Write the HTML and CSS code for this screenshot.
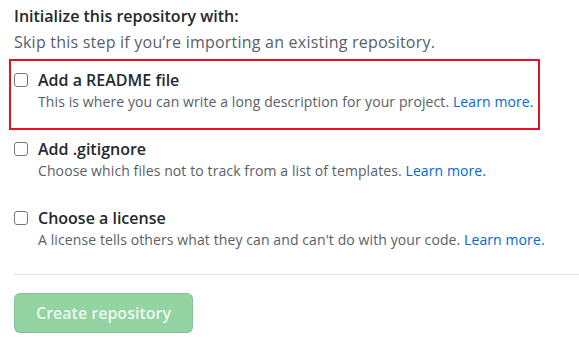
FILE: index.html
```html
<!DOCTYPE html>
<html>
<head>
    <link rel="stylesheet" href="styles.css">
</head>
<body>
    <div class="init-section">
        <h3 class="init-title">Initialize this repository with:</h3>
        <p class="init-note">Skip this step if you’re importing an existing repository.</p>

        <div class="option marked">
            <input type="checkbox" class="option-check">
            <div class="option-body">
                <div class="option-title">Add a README file</div>
                <div class="option-desc">This is where you can write a long description for your project. <a href="#">Learn more.</a></div>
            </div>
        </div>

        <div class="option">
            <input type="checkbox" class="option-check">
            <div class="option-body">
                <div class="option-title">Add .gitignore</div>
                <div class="option-desc">Choose which files not to track from a list of templates. <a href="#">Learn more.</a></div>
            </div>
        </div>

        <div class="option">
            <input type="checkbox" class="option-check">
            <div class="option-body">
                <div class="option-title">Choose a license</div>
                <div class="option-desc">A license tells others what they can and can't do with your code. <a href="#">Learn more.</a></div>
            </div>
        </div>
    </div>

    <hr class="divider">

    <button class="btn-create" disabled>Create repository</button>
</body>
</html>
```

FILE: styles.css
```css
body {
    margin: 0;
    padding: 4px 0 0 14px;
    font-family: 'Open Sans', 'Noto Sans', sans-serif;
    color: #24292e;
    background: #fff;
}

.init-title {
    margin: 0 0 2px 0;
    font-size: 16px;
    font-weight: 600;
    line-height: 24px;
}

.init-note {
    margin: 0 0 14px 0;
    font-size: 16px;
    line-height: 24px;
    letter-spacing: 0.22px;
    color: #586069;
}

.option {
    position: relative;
    display: flex;
    align-items: flex-start;
    gap: 10px;
    margin-bottom: 25px;
}

.option:last-child {
    margin-bottom: 24px;
}

.option.marked::after {
    content: '';
    position: absolute;
    left: -5px;
    top: -9px;
    bottom: -18px;
    width: 531px;
    border: 2px solid #e81123;
    box-sizing: border-box;
    pointer-events: none;
}

.option-check {
    appearance: none;
    -webkit-appearance: none;
    flex: none;
    width: 14px;
    height: 14px;
    margin: 5px 0 0 0;
    border: 1px solid #767676;
    border-radius: 3px;
    background: #fff;
    box-sizing: border-box;
}

.option-title {
    font-size: 16px;
    font-weight: 600;
    line-height: 24px;
}

.option-desc {
    font-size: 14px;
    line-height: 20px;
    letter-spacing: 0.1px;
    color: #586069;
}

.option-desc a {
    color: #0366d6;
    text-decoration: none;
}

.divider {
    margin: 0 0 18px 0;
    border: 0;
    border-top: 1px solid #e1e4e8;
}

.btn-create {
    width: 179px;
    height: 40px;
    padding: 0 16px;
    font-family: inherit;
    font-size: 16px;
    font-weight: 600;
    color: rgba(255, 255, 255, 0.85);
    background: #94d3a2;
    border: 1px solid rgba(27, 31, 35, 0.1);
    border-radius: 6px;
}
```
